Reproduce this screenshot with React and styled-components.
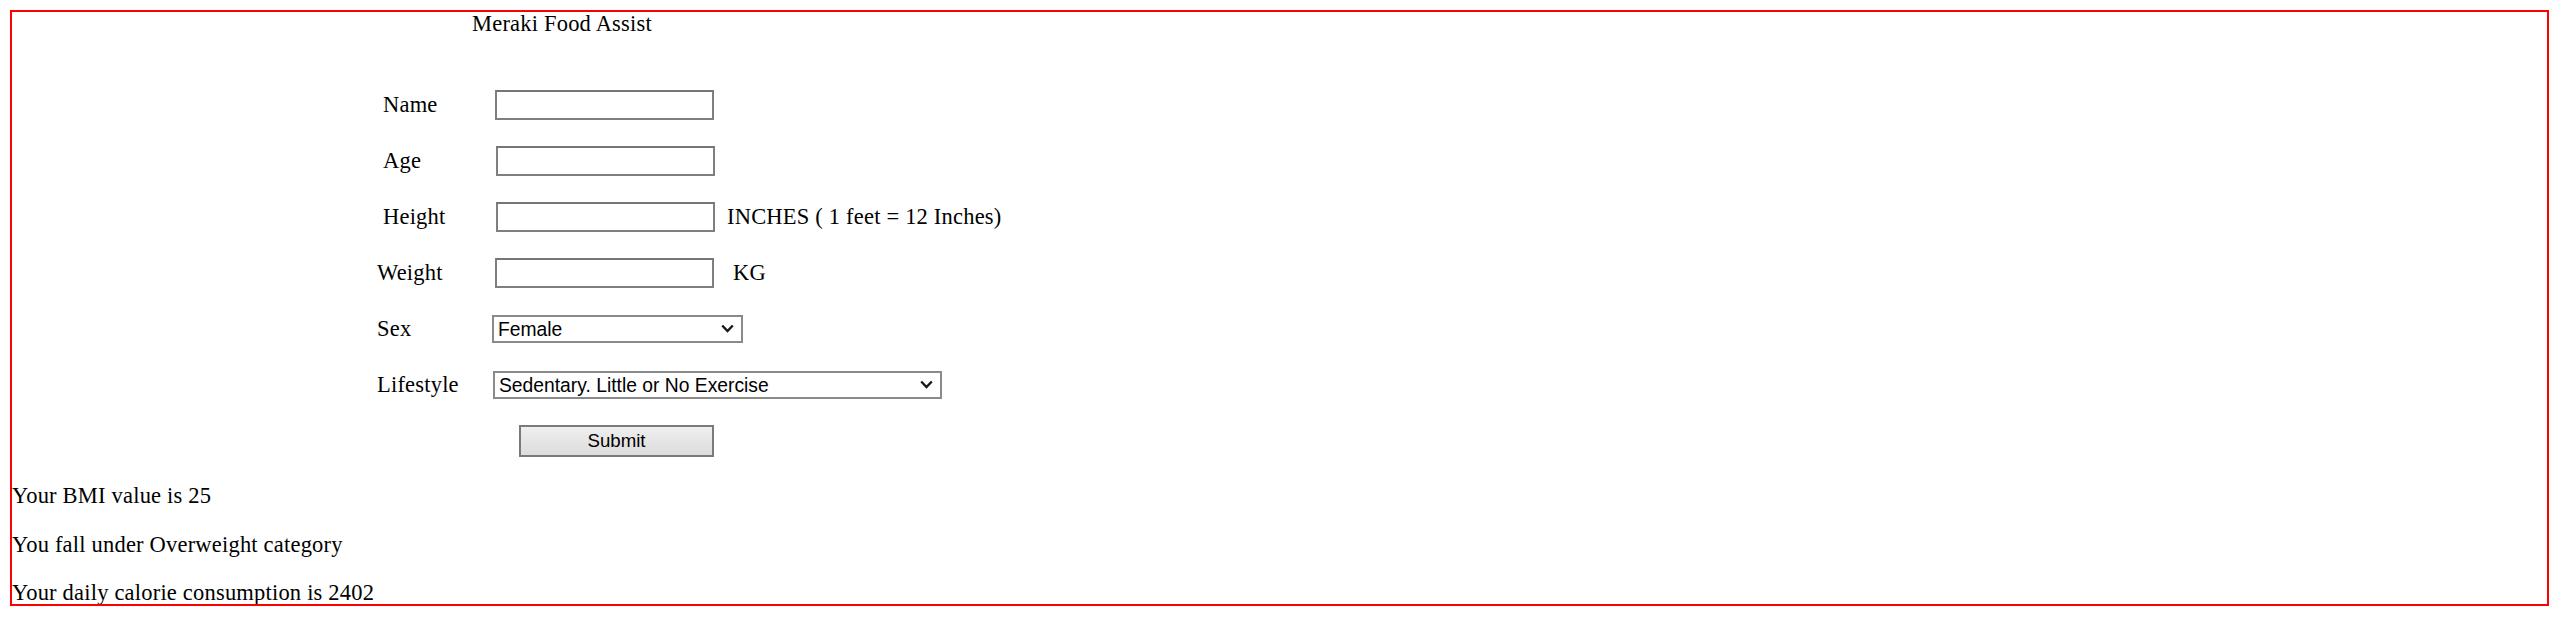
import React from "react";
import styled, { createGlobalStyle } from "styled-components";

const GlobalStyle = createGlobalStyle`
  html, body {
    margin: 0;
    padding: 0;
    background: #ffffff;
  }
  body {
    font-family: "Liberation Serif", "Times New Roman", serif;
    font-size: 22.5px;
    letter-spacing: 0.2px;
    color: #000;
  }
`;

const Frame = styled.div`
  box-sizing: border-box;
  width: 2539px;
  height: 596px;
  margin: 10px;
  border: 2px solid #ff0000;
  overflow: hidden;
`;

const Title = styled.div`
  margin-left: 460px;
  line-height: 24.5px;
  height: 24.5px;
`;

const Form = styled.form`
  margin-top: 40.5px;
  margin-left: 365px;
  display: flex;
  flex-direction: column;
`;

const Row = styled.div`
  display: grid;
  grid-template-columns: 118px auto;
  align-items: center;
  height: 56px;
`;

const Label = styled.label`
  padding-left: ${(p) => p.$indent || 0}px;
  line-height: 24.5px;
`;

const Field = styled.div`
  display: flex;
  align-items: center;
  margin-left: ${(p) => p.$offset || 0}px;
`;

const TextInput = styled.input`
  box-sizing: border-box;
  width: 219px;
  height: 30px;
  margin: 0;
  border: 2px solid #7f7f7f;
  border-top-color: #757575;
  background: #fff;
  font-family: "Liberation Sans", Arial, sans-serif;
  font-size: 18px;
  padding: 0 4px;
  outline: none;
`;

const Unit = styled.span`
  margin-left: ${(p) => p.$gap}px;
  line-height: 24.5px;
  white-space: nowrap;
`;

const SelectWrap = styled.div`
  position: relative;
  width: ${(p) => p.$width}px;
  height: 28px;
`;

const Select = styled.select`
  appearance: none;
  -webkit-appearance: none;
  box-sizing: border-box;
  width: 100%;
  height: 100%;
  margin: 0;
  border: 2px solid #8a8a8a;
  border-radius: 0;
  background: #fff;
  color: #000;
  font-family: "Liberation Sans", Arial, sans-serif;
  font-size: 19.3px;
  letter-spacing: 0;
  padding: 0 30px 0 4px;
  outline: none;
`;

const Chevron = styled.svg`
  position: absolute;
  right: 9px;
  top: 9px;
  width: 13px;
  height: 9px;
  pointer-events: none;
`;

const SubmitButton = styled.button`
  box-sizing: border-box;
  width: 195px;
  height: 32px;
  margin: 0;
  border: 2px solid #7a7a7a;
  border-radius: 0;
  background: linear-gradient(#efefef, #dcdcdc);
  color: #000;
  font-family: "Liberation Sans", Arial, sans-serif;
  font-size: 18.67px;
  letter-spacing: 0;
  padding: 0;
`;

const Results = styled.div`
  margin-top: 15px;
  display: flex;
  flex-direction: column;
  gap: 24px;
`;

const ResultLine = styled.div`
  line-height: 24.5px;
`;

function ChevronIcon() {
  return (
    <Chevron viewBox="0 0 13 9">
      <path d="M1.2 1.5 L6.5 7 L11.8 1.5" fill="none" stroke="#1a1a1a" strokeWidth="2.4" />
    </Chevron>
  );
}

function DropDown({ width, value, options }) {
  return (
    <SelectWrap $width={width}>
      <Select defaultValue={value}>
        {options.map((o) => (
          <option key={o}>{o}</option>
        ))}
      </Select>
      <ChevronIcon />
    </SelectWrap>
  );
}

export default function App() {
  return (
    <>
      <GlobalStyle />
      <Frame>
        <Title>Meraki Food Assist</Title>
        <Form onSubmit={(e) => e.preventDefault()}>
          <Row>
            <Label $indent={6}>Name</Label>
            <Field>
              <TextInput type="text" />
            </Field>
          </Row>
          <Row>
            <Label $indent={6}>Age</Label>
            <Field $offset={1}>
              <TextInput type="text" />
            </Field>
          </Row>
          <Row>
            <Label $indent={6}>Height</Label>
            <Field $offset={1}>
              <TextInput type="text" />
              <Unit $gap={12}>INCHES ( 1 feet = 12 Inches)</Unit>
            </Field>
          </Row>
          <Row>
            <Label>Weight</Label>
            <Field>
              <TextInput type="text" />
              <Unit $gap={19}>KG</Unit>
            </Field>
          </Row>
          <Row>
            <Label>Sex</Label>
            <Field $offset={-3}>
              <DropDown width={251} value="Female" options={["Female", "Male"]} />
            </Field>
          </Row>
          <Row>
            <Label>Lifestyle</Label>
            <Field $offset={-2}>
              <DropDown
                width={449}
                value="Sedentary. Little or No Exercise"
                options={[
                  "Sedentary. Little or No Exercise",
                  "Lightly Active. Exercise 1-3 days a week",
                  "Moderately Active. Exercise 3-5 days a week",
                  "Very Active. Exercise 6-7 days a week",
                ]}
              />
            </Field>
          </Row>
          <Row>
            <span />
            <Field $offset={24}>
              <SubmitButton type="submit">Submit</SubmitButton>
            </Field>
          </Row>
        </Form>
        <Results>
          <ResultLine>Your BMI value is 25</ResultLine>
          <ResultLine>You fall under Overweight category</ResultLine>
          <ResultLine>Your daily calorie consumption is 2402</ResultLine>
        </Results>
      </Frame>
    </>
  );
}
